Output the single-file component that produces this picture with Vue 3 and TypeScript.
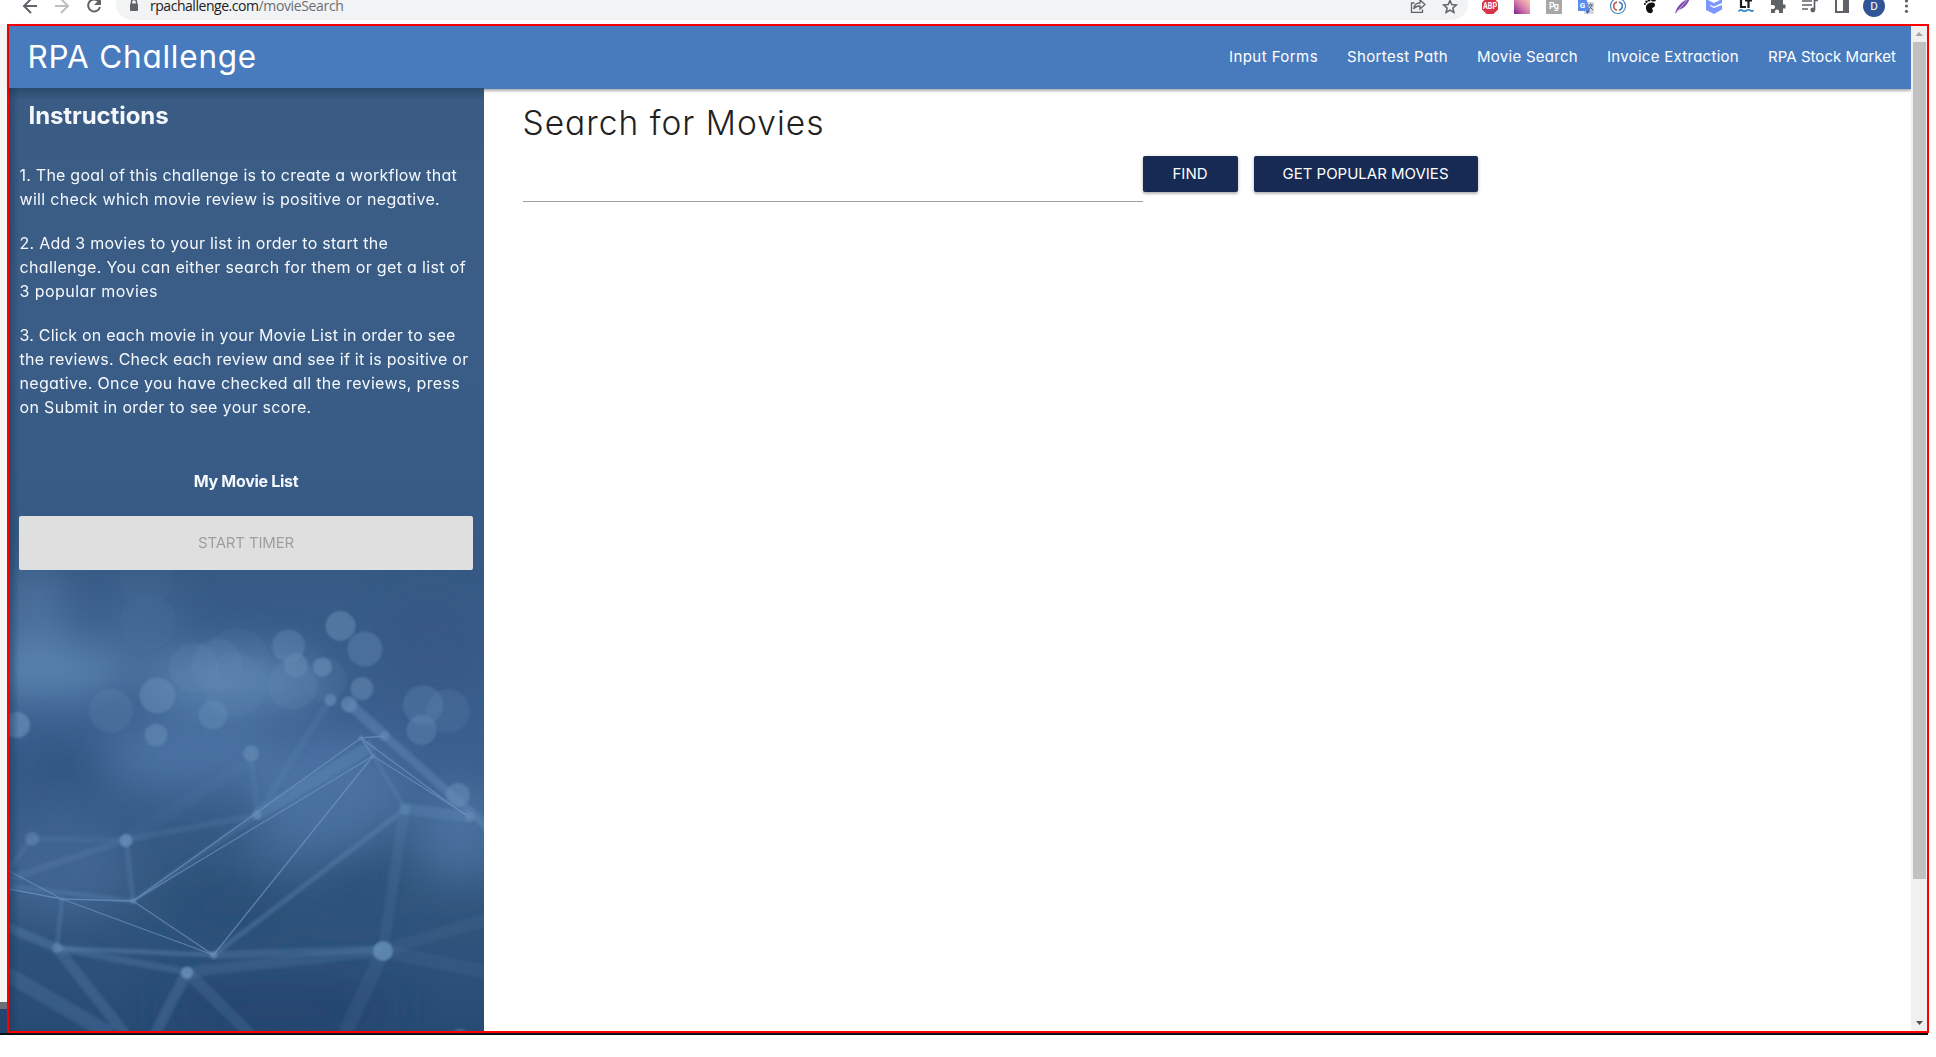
<script setup lang="ts">
import type { Directive } from 'vue'

// Spreads a line of text over a given width through its letter spacing.
const vFit: Directive<HTMLElement, number> = {
  mounted(el, binding) {
    const natural = el.getBoundingClientRect().width
    const count = (el.textContent ?? '').trim().length
    el.style.letterSpacing = `${(binding.value - natural) / count}px`
  },
}

interface Line { text: string; width: number }

const navItems: Line[] = [
  { text: 'Input Forms', width: 89 },
  { text: 'Shortest Path', width: 101 },
  { text: 'Movie Search', width: 101 },
  { text: 'Invoice Extraction', width: 132 },
  { text: 'RPA Stock Market', width: 128 },
]

const steps: Line[][] = [
  [
    { text: '1. The goal of this challenge is to create a workflow that', width: 437.5 },
    { text: 'will check which movie review is positive or negative.', width: 420.5 },
  ],
  [
    { text: '2. Add 3 movies to your list in order to start the', width: 368.5 },
    { text: 'challenge. You can either search for them or get a list of', width: 446.5 },
    { text: '3 popular movies', width: 138.5 },
  ],
  [
    { text: '3. Click on each movie in your Movie List in order to see', width: 436 },
    { text: 'the reviews. Check each review and see if it is positive or', width: 449 },
    { text: 'negative. Once you have checked all the reviews, press', width: 440.5 },
    { text: 'on Submit in order to see your score.', width: 292 },
  ],
]

// x, y, radius, opacity
const bokeh: number[][] = [
  [340.5, 626, 15, 0.55], [365, 649, 17.5, 0.4], [288.5, 646, 16.5, 0.4], [296, 665.5, 12, 0.5],
  [322.5, 667, 9.5, 0.65], [362, 688.5, 11.5, 0.5], [330.5, 700, 6, 0.65], [349, 704.5, 8, 0.65],
  [157.5, 695.5, 18, 0.5], [213, 715, 14.5, 0.45], [156, 735, 11.5, 0.55], [17, 725, 13, 0.7],
  [111, 711, 22, 0.22], [423, 705, 20, 0.3], [448, 711, 22, 0.2], [421.5, 730, 15, 0.4],
  [194, 668, 25, 0.2], [217, 665, 26, 0.2], [325, 680, 22, 0.12], [292, 685, 25, 0.18],
  [237, 660, 32, 0.1], [148, 622, 28, 0.07], [235, 685, 32, 0.14], [146, 578, 28, 0.05],
  [251, 753.5, 8, 0.65], [257, 815, 4.5, 0.7], [32, 839, 7, 0.5], [126, 840.5, 6.5, 0.8],
  [57, 948, 5, 0.55], [213.5, 955, 3.5, 0.75], [187, 972.5, 6, 0.85], [383, 951, 10, 0.8],
  [385, 736, 5, 0.55], [458, 795, 12, 0.55], [470, 817, 5, 0.55], [405, 809, 6, 0.3],
  [133, 901, 2.6, 0.7], [62, 899, 2, 0.6], [361, 738, 2.4, 0.7], [373, 756, 2.4, 0.6],
  [460, 1037, 8, 0.5],
]

// x1, y1, x2, y2
const threads: number[][] = [
  [361, 738, 133, 901], [373, 756, 133, 901], [373, 756, 213.5, 955], [133, 901, 213.5, 955],
  [62, 899, 213.5, 955], [62, 899, 133, 901], [9, 871, 62, 899], [9, 889, 62, 899],
  [361, 738, 373, 756], [361, 738, 465, 815], [373, 756, 470, 817], [361, 738, 385, 736],
]

// x1, y1, x2, y2, width, opacity
const beams: number[][] = [
  [349, 704, 385, 736, 11, 0.4], [385, 736, 500, 838, 9, 0.38], [405, 809, 213.5, 955, 5, 0.32],
  [405, 805, 383, 951, 11, 0.15], [57, 948, 213.5, 955, 5, 0.36], [213.5, 955, 383, 949, 8, 0.24],
  [57, 948, 187, 972, 7, 0.26], [187, 972, 383, 951, 11, 0.18], [0, 924, 57, 948, 9, 0.3],
  [57, 948, 125, 1034, 11, 0.24], [187, 972, 155, 1034, 11, 0.26], [187, 972, 250, 1034, 12, 0.2],
  [383, 951, 345, 1034, 15, 0.12], [0, 970, 110, 1034, 15, 0.22], [126, 840, 133, 901, 5, 0.25],
  [126, 840, 257, 815, 6, 0.18], [32, 839, 126, 840, 6, 0.14], [257, 815, 251, 753, 6, 0.15],
  [257, 815, 330, 700, 7, 0.15], [257, 815, 373, 745, 12, 0.3], [126, 840, 0, 882, 7, 0.2],
  [0, 885, 133, 901, 5, 0.28], [405, 809, 470, 817, 11, 0.28], [62, 899, 57, 948, 4, 0.3],
  [373, 756, 405, 809, 4, 0.25], [257, 815, 133, 901, 5, 0.22], [383, 951, 500, 975, 14, 0.1],
  [383, 951, 500, 915, 12, 0.1], [126, 840, 251, 760, 14, 0.08], [32, 839, 9, 868, 5, 0.18],
]
</script>

<template>
  <div class="screen">
    <div class="toolbar">
      <svg class="nav-icons" width="116" height="24" viewBox="0 0 116 24" fill="none" stroke-width="2">
        <path d="M37 6H25M31 -1L24 6L31 13" stroke="#5f6368" />
        <path d="M55 6H67M61 -1L68 6L61 13" stroke="#bcbec1" />
        <path d="M98.5 1.2A6 6 0 1 0 100 7" stroke="#5f6368" />
        <path d="M101 -2V5H94Z" fill="#5f6368" />
      </svg>
      <div class="address">
        <svg class="lock" width="12" height="16" viewBox="0 0 12 16">
          <rect x="2" y="3.500" width="8" height="7.500" rx="1" fill="#5f6368" />
          <path d="M3.500 5V2a2.500 2.500 0 0 1 5 0V5" fill="none" stroke="#5f6368" stroke-width="1.400" />
        </svg>
        <div class="url"><span v-fit="108.5">rpachallenge.com</span><span v-fit="85" class="path">/movieSearch</span></div>
        <svg class="address-icons" width="64" height="24" viewBox="1404 0 64 24" fill="none" stroke="#5f6368" stroke-width="1.3">
          <path d="M1414.500 3H1411.500V12.300H1422.500V9.500M1413.800 9C1414 5 1416.500 3 1420 3V0L1425 4.500L1420 9V6C1417 6 1415 7 1413.800 9Z" />
          <path d="M1450 0.500L1451.800 4.600L1456.300 5L1452.900 8L1453.900 12.400L1450 10.100L1446.100 12.400L1447.100 8L1443.700 5L1448.200 4.600Z" stroke-width="1.500" />
        </svg>
      </div>
      <svg class="extensions" width="462" height="24" viewBox="1474 0 462 24">
        <defs>
          <linearGradient id="sunset" x1="0" y1="1" x2="1" y2="0">
            <stop offset="0" stop-color="#7b208f" /><stop offset=".5" stop-color="#dc83ad" /><stop offset="1" stop-color="#ffd2b4" />
          </linearGradient>
        </defs>
        <path d="M1486.500 -2H1493.500L1498 2.500V9.500L1493.500 14H1486.500L1482 9.500V2.500Z" fill="#d8354a" />
        <text x="1490" y="9.200" class="badge" font-size="8.500" textLength="14" lengthAdjust="spacingAndGlyphs">ABP</text>
        <rect x="1514" y="-2" width="16" height="16" fill="url(#sunset)" />
        <rect x="1546" y="-2" width="16" height="16" fill="#a8a8a8" />
        <text x="1554" y="8.500" class="badge" font-size="9" textLength="10">Pg</text>
        <rect x="1584" y="2" width="10" height="12" fill="#d5d8dc" />
        <path d="M1578 -2H1586L1590 11H1578Z" fill="#5b8def" />
        <path d="M1586 11H1590L1587 14Z" fill="#3563c4" />
        <path d="M1588.500 5H1593M1590.700 3.500V5M1592 5Q1591 8 1588.500 9.500M1589.500 6.500L1593 10" stroke="#5b6670" fill="none" />
        <text x="1582.500" y="8" class="badge" font-size="8">G</text>
        <circle cx="1618" cy="6" r="7.500" fill="none" stroke="#4589bd" stroke-width="1.200" />
        <path d="M1617 2A4.200 4.200 0 0 0 1617 10.200" fill="none" stroke="#c34b46" stroke-width="1.500" />
        <path d="M1619 2A4.200 4.200 0 0 1 1619 10.200" fill="none" stroke="#2f78b5" stroke-width="1.500" />
        <g fill="#111">
          <ellipse cx="1653.500" cy="-.5" rx="2.600" ry="2" /><circle cx="1649" cy="0" r="1.500" /><circle cx="1646.500" cy="1.700" r="1.200" /><circle cx="1644.900" cy="4" r="1" />
          <path d="M1646 6.500C1647 2.500 1654 1 1655 4.500C1655.500 7 1652 7.500 1652 9C1654 10 1652.500 14 1649.500 13C1647 12.500 1645.500 9 1646 6.500Z" />
        </g>
        <path d="M1675 14C1676 8 1681 1 1690 -2C1688 4 1684 9 1678 10Z" fill="#7d4bab" />
        <path d="M1676 13L1687 0" stroke="#cda8e8" />
        <path d="M1706 -1L1714 3L1722 -1V3L1714 6.500L1710 5V6L1714 8L1722 5V9.500L1714 14L1706 10Z" fill="#7c96ff" />
        <path d="M1741 -1V7H1746M1745 0.500H1752M1748.500 0.500V8" fill="none" stroke="#1b1b1b" stroke-width="2.200" />
        <path d="M1738.500 11.500Q1740.500 9 1742.500 10.500T1746.500 10.500T1750.500 10.500T1753.500 10" fill="none" stroke="#2f83c5" stroke-width="1.600" />
        <path d="M1771 0H1775V-2H1779V0H1783V4.500H1785.500V8.500H1783V13H1779V11.500A2 2 0 0 0 1775 11.500V13H1771V9H1773A2 2 0 0 0 1773 5H1771Z" fill="#5f6368" />
        <g fill="none" stroke="#5f6368" stroke-width="1.700">
          <path d="M1802 1H1812M1802 5H1812M1802 9H1808M1814.500 10V0.500H1818" />
          <rect x="1836" y="-1" width="12" height="13" stroke-width="2" />
        </g>
        <circle cx="1812.800" cy="10" r="2.400" fill="#5f6368" />
        <rect x="1843" y="0" width="5" height="12" fill="#5f6368" />
        <circle cx="1874" cy="6" r="11" fill="#2f5597" />
        <text x="1874" y="10" class="badge light" font-size="11.500">D</text>
        <g fill="#5f6368"><circle cx="1906.500" cy="1" r="1.600" /><circle cx="1906.500" cy="6" r="1.600" /><circle cx="1906.500" cy="11.300" r="1.600" /></g>
      </svg>
    </div>

    <div class="middle">
      <div class="edge"><div class="edge-gray"></div><div class="edge-navy"></div></div>
      <div class="frame">
        <div class="page">
          <header class="header">
            <div class="brand"><span v-fit="229.5">RPA Challenge</span></div>
            <nav class="nav">
              <a v-for="item in navItems" :key="item.text"><span v-fit="item.width">{{ item.text }}</span></a>
            </nav>
          </header>
          <div class="body">
            <aside class="sidebar">
              <svg class="backdrop" width="475" height="943" viewBox="9 88 475 943">
                <defs>
                  <linearGradient id="sky" x1="0" y1="0" x2="0" y2="1">
                    <stop offset="0" stop-color="#3a5c84" /><stop offset=".3" stop-color="#3a5d87" />
                    <stop offset=".5" stop-color="#365a84" /><stop offset=".7" stop-color="#3b6090" />
                    <stop offset=".84" stop-color="#33587f" /><stop offset="1" stop-color="#284b75" />
                  </linearGradient>
                  <linearGradient id="side" x1="0" x2="1">
                    <stop offset="0" stop-color="#1c3a5c" stop-opacity=".55" /><stop offset="1" stop-color="#1c3a5c" stop-opacity="0" />
                  </linearGradient>
                  <linearGradient id="top" x1="0" y1="0" x2="0" y2="1">
                    <stop offset="0" stop-color="#1c3a52" stop-opacity=".5" /><stop offset="1" stop-color="#1c3a52" stop-opacity="0" />
                  </linearGradient>
                  <filter id="cloud" filterUnits="userSpaceOnUse" x="-100" y="450" width="720" height="700"><feGaussianBlur stdDeviation="20" /></filter>
                  <filter id="soft" filterUnits="userSpaceOnUse" x="-20" y="600" width="540" height="460"><feGaussianBlur stdDeviation="1.800" /></filter>
                  <filter id="rim" filterUnits="userSpaceOnUse" x="-20" y="500" width="540" height="560"><feGaussianBlur stdDeviation=".8" /></filter>
                </defs>
                <rect x="9" y="88" width="475" height="943" fill="url(#sky)" />
                <g filter="url(#cloud)">
                  <ellipse cx="35" cy="620" rx="36" ry="55" fill="#5f86b2" opacity=".5" />
                  <ellipse cx="140" cy="630" rx="45" ry="50" fill="#4d76a5" opacity=".4" />
                  <ellipse cx="50" cy="672" rx="80" ry="28" fill="#648db9" opacity=".75" />
                  <ellipse cx="235" cy="682" rx="90" ry="30" fill="#648db9" opacity=".75" />
                  <ellipse cx="190" cy="755" rx="90" ry="35" fill="#5580b0" opacity=".55" />
                  <ellipse cx="330" cy="790" rx="80" ry="55" fill="#5a82b2" opacity=".55" />
                  <ellipse cx="300" cy="850" rx="60" ry="25" fill="#5078a8" opacity=".4" />
                  <ellipse cx="460" cy="830" rx="45" ry="50" fill="#5a82b2" opacity=".55" />
                  <ellipse cx="60" cy="765" rx="55" ry="24" fill="#2b5079" opacity=".55" />
                  <ellipse cx="430" cy="645" rx="50" ry="50" fill="#305580" opacity=".45" />
                  <ellipse cx="60" cy="870" rx="70" ry="50" fill="#4a70a0" opacity=".55" />
                  <ellipse cx="230" cy="905" rx="65" ry="32" fill="#264c75" opacity=".65" />
                  <ellipse cx="350" cy="890" rx="50" ry="35" fill="#284e78" opacity=".6" />
                  <ellipse cx="280" cy="1010" rx="120" ry="30" fill="#23456d" opacity=".7" />
                </g>
                <g filter="url(#soft)" stroke="#6991bd">
                  <line v-for="(b, i) in beams" :key="i" :x1="b[0]" :y1="b[1]" :x2="b[2]" :y2="b[3]" :stroke-width="b[4]" :opacity="b[5]" />
                </g>
                <g stroke="#7399c5" stroke-width="1.300" opacity=".65">
                  <line v-for="(t, i) in threads" :key="i" :x1="t[0]" :y1="t[1]" :x2="t[2]" :y2="t[3]" />
                </g>
                <g filter="url(#rim)" fill="#678eb6">
                  <circle v-for="(c, i) in bokeh" :key="i" :cx="c[0]" :cy="c[1]" :r="c[2]" :opacity="c[3]" />
                </g>
                <rect x="9" y="88" width="10" height="943" fill="url(#side)" />
                <rect x="9" y="88" width="475" height="12" fill="url(#top)" />
              </svg>
              <div class="instructions">
                <h2><span v-fit="140">Instructions</span></h2>
                <p v-for="(step, i) in steps" :key="i">
                  <span v-for="line in step" :key="line.text" class="line"><span v-fit="line.width">{{ line.text }}</span></span>
                </p>
                <h3><span v-fit="104.5">My Movie List</span></h3>
                <button class="timer" disabled><span v-fit="96">START TIMER</span></button>
              </div>
            </aside>
            <main class="main">
              <h1><span v-fit="302">Search for Movies</span></h1>
              <div class="form">
                <input type="text" class="query" />
                <button class="find"><span v-fit="35">FIND</span></button>
                <button class="popular"><span v-fit="166">GET POPULAR MOVIES</span></button>
              </div>
            </main>
          </div>
        </div>
        <div class="scrollbar">
          <svg width="16" height="16"><path d="M4.500 10L8 6L12 10Z" fill="#a3a3a3" /></svg>
          <div class="thumb"></div>
          <svg class="down" width="16" height="16"><path d="M5 6H12L8.500 10Z" fill="#505050" /></svg>
        </div>
      </div>
    </div>
    <div class="rule"></div>
  </div>
</template>

<style>
body {
  background: #fff;
}
</style>

<style scoped>
.screen {
  width: 1936px;
  height: 1057px;
  overflow: hidden;
  background: #fff;
  font-family: Inter, "Open Sans", sans-serif;
  font-feature-settings: "cv11" 1;
  font-optical-sizing: none;
}
.screen * {
  box-sizing: border-box;
}
span {
  display: inline-block;
  white-space: nowrap;
}
svg {
  display: block;
  flex: none;
}
.toolbar {
  display: flex;
  height: 24px;
  overflow: hidden;
}
.address {
  display: flex;
  width: 1352px;
  height: 32px;
  margin: -12px 6px 0 0;
  padding-top: 12px;
  border-radius: 16px;
  background: #f1f3f4;
}
.lock {
  margin: 0 0 0 12px;
}
.url {
  display: flex;
  width: 1274px;
  padding-left: 10px;
  margin-top: -4px;
  font: 14px/20px "Open Sans", "Noto Sans", sans-serif;
  color: #202124;
}
.address-icons {
  margin-left: -10px;
}
.path {
  color: #6b6f73;
}
.badge {
  fill: #fff;
  font-family: Roboto, sans-serif;
  font-weight: 700;
  text-anchor: middle;
}
.badge.light {
  font-weight: 400;
}
.middle {
  display: flex;
  height: 1009px;
}
.edge {
  display: flex;
  flex-direction: column;
  justify-content: flex-end;
  width: 7px;
  background: #f5f5f4;
}
.edge-gray {
  height: 7px;
  background: #6a7078;
}
.edge-navy {
  height: 24px;
  background: #24466e;
}
.frame {
  display: flex;
  width: 1922px;
  border: 2px solid #f00;
}
.page {
  display: flex;
  flex-direction: column;
  width: 1902px;
}
.header {
  display: flex;
  align-items: flex-start;
  justify-content: space-between;
  flex: none;
  height: 63px;
  padding-left: 18.5px;
  background: #477bbd;
  box-shadow: 0 2px 2px rgba(0, 0, 0, 0.24), 0 1px 5px rgba(0, 0, 0, 0.14);
  color: #fff;
}
.brand {
  font-size: 31.5px;
  line-height: 61px;
}
.nav {
  display: flex;
  gap: 29px;
  padding-right: 15px;
  font-size: 15px;
  line-height: 61px;
}
.body {
  display: flex;
  flex: 1;
}
.sidebar {
  position: relative;
  width: 475px;
  margin-top: -1px;
  overflow: hidden;
  color: #f4f8fc;
}
.backdrop {
  position: absolute;
  left: 0;
  bottom: 0;
}
.instructions {
  position: relative;
  padding: 11px 11px 0 10px;
}
h1,
h2,
h3,
p {
  margin: 0;
}
h2 {
  margin: 0 0 30px 9.5px;
  font-size: 24px;
  font-weight: 650;
  line-height: 34px;
}
p {
  margin: 0 0 20px 0.5px;
  font-size: 16px;
  line-height: 24px;
}
.line {
  display: block;
  height: 24px;
}
h3 {
  margin: 50px 0 23px;
  font-size: 16px;
  font-weight: 650;
  line-height: 24px;
  text-align: center;
}
p:last-of-type {
  margin-bottom: 0;
}
button {
  padding: 0 0 2px;
  border: 0;
  border-radius: 2px;
  font-family: inherit;
  font-feature-settings: inherit;
  font-size: 15px;
}
.timer {
  width: 454px;
  height: 54px;
  background: #dfdfdf;
  color: #9f9f9f;
}
.main {
  padding: 12px 0 0 38.5px;
}
h1 {
  margin-bottom: 11px;
  font-size: 33.5px;
  font-weight: 300;
  line-height: 44px;
  color: #212121;
}
.form {
  display: flex;
  align-items: flex-start;
}
.query {
  width: 620px;
  height: 46px;
  padding: 0;
  border: 0;
  border-bottom: 1px solid #9e9e9e;
  outline: none;
}
.find,
.popular {
  height: 36px;
  background: #172a53;
  box-shadow: 0 2px 2px rgba(0, 0, 0, 0.16), 0 1px 4px rgba(0, 0, 0, 0.2);
  color: #fff;
}
.find {
  width: 95px;
  margin-right: 16px;
}
.popular {
  width: 224px;
}
.scrollbar {
  display: flex;
  flex-direction: column;
  width: 16px;
  background: #f0f0f0;
}
.thumb {
  width: 13px;
  height: 837px;
  margin-left: 2px;
  background: #c1c1c1;
}
.down {
  margin-top: auto;
}
.rule {
  width: 1928px;
  height: 2px;
  background: #0c0f14;
}
</style>
